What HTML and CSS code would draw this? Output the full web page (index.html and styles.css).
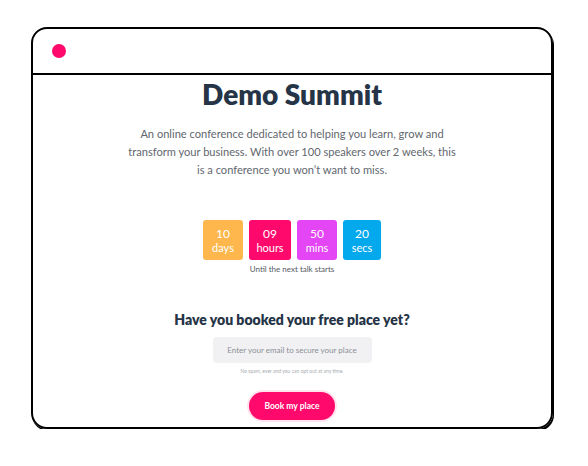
FILE: index.html
```html
<!DOCTYPE html>
<html>
<head>
<meta charset="utf-8">
<link rel="stylesheet" href="styles.css">
</head>
<body>
<div class="frame">
  <div class="bar"><span class="dot"></span></div>
  <main class="content">
    <h1 class="title">Demo Summit</h1>
    <p class="intro">An online conference dedicated to helping you learn, grow and transform your business. With over 100 speakers over 2 weeks, this is a conference you won’t want to miss.</p>
    <div class="countdown">
      <div class="unit unit-days"><span class="num">10</span><span class="lbl">days</span></div>
      <div class="unit unit-hours"><span class="num">09</span><span class="lbl">hours</span></div>
      <div class="unit unit-mins"><span class="num">50</span><span class="lbl">mins</span></div>
      <div class="unit unit-secs"><span class="num">20</span><span class="lbl">secs</span></div>
    </div>
    <p class="until">Until the next talk starts</p>
    <h2 class="cta">Have you booked your free place yet?</h2>
    <input class="email" type="text" placeholder="Enter your email to secure your place">
    <p class="note">No spam, ever and you can opt out at any time.</p>
    <button class="book">Book my place</button>
  </main>
</div>
</body>
</html>
```
FILE: styles.css
```css
html, body {
  margin: 0;
  padding: 0;
  background: #fff;
}
body {
  font-family: Lato, "Open Sans", sans-serif;
  padding: 27px 0 0 31px;
}
.frame {
  width: 518px;
  height: 398px;
  border: 2px solid #000;
  border-radius: 16px;
  box-shadow: 1px 2px 0 0 #000;
  display: flex;
  flex-direction: column;
  overflow: hidden;
}
.bar {
  height: 46px;
  box-sizing: border-box;
  border-bottom: 2px solid #000;
  flex-shrink: 0;
  display: flex;
  align-items: center;
  padding-left: 19px;
}
.dot {
  width: 14px;
  height: 14px;
  border-radius: 50%;
  background: #ff0a6c;
}
.content {
  display: flex;
  flex-direction: column;
  align-items: center;
  text-align: center;
}
.title {
  margin: 2px 0 0;
  font-size: 28px;
  line-height: 34px;
  font-weight: 800;
  color: #253446;
}
.intro {
  margin: 14px 0 0;
  width: 330px;
  font-size: 11.1px;
  line-height: 18px;
  font-weight: 400;
  color: #62676e;
}
.countdown {
  margin-top: 41px;
  display: flex;
  gap: 6px;
}
.unit {
  height: 40px;
  padding: 0 6px;
  min-width: 28px;
  border-radius: 3px;
  display: flex;
  flex-direction: column;
  align-items: center;
  justify-content: center;
  color: #fff;
}
.num { font-size: 12px; line-height: 14px; }
.lbl { font-size: 11px; line-height: 13px; }
.unit-hours { padding: 0 7px; }
.unit-secs { padding: 0 5px; }
.unit-days { background: #fdb74d; }
.unit-hours { background: #ff0a6c; }
.unit-mins { background: #e445f5; }
.unit-secs { background: #04a8ec; }
.until {
  margin: 3px 0 0;
  font-size: 8px;
  line-height: 12px;
  color: #555b63;
}
.cta {
  margin: 36px 0 0;
  font-size: 14px;
  line-height: 18px;
  font-weight: 800;
  color: #253446;
}
.email {
  margin-top: 8px;
  width: 159px;
  height: 26px;
  box-sizing: border-box;
  border: none;
  border-radius: 4px;
  background: #f1f1f3;
  font-family: Lato, sans-serif;
  font-size: 8px;
  text-align: center;
  padding: 0;
  outline: none;
}
.email::placeholder { color: #8a8f96; }
.note {
  margin: 3px 0 0;
  font-size: 5px;
  line-height: 10px;
  color: #a8adb3;
}
.book {
  margin-top: 16px;
  width: 86px;
  height: 28px;
  border: none;
  border-radius: 14px;
  background: #ff0a6c;
  color: #fff;
  font-family: Lato, sans-serif;
  font-size: 8.5px;
  font-weight: 700;
  box-shadow: 0 0 0 2px #ffe3ee;
  padding: 0;
}
```
